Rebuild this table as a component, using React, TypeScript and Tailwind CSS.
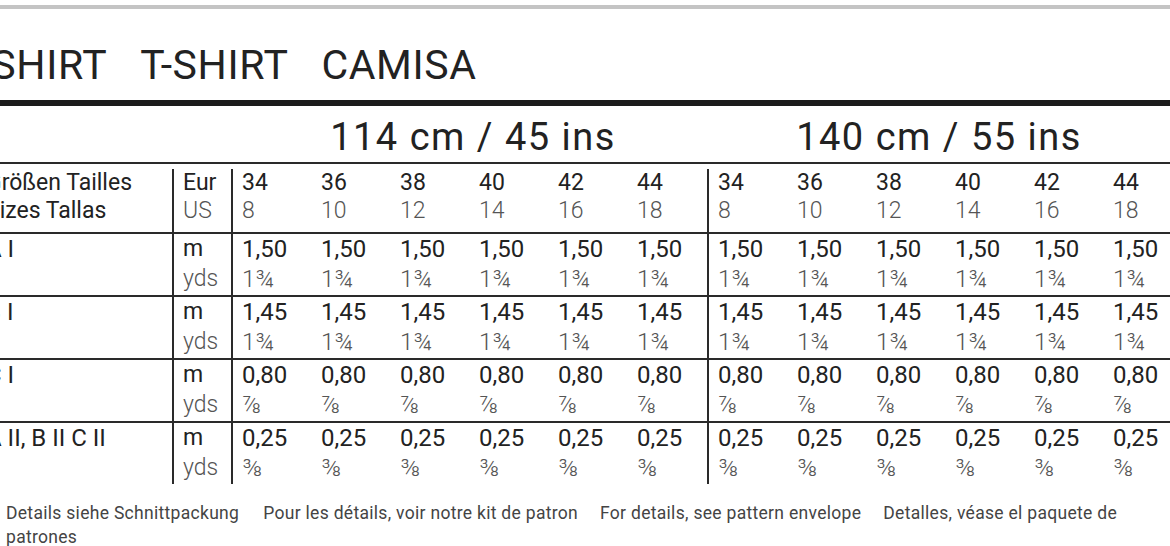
const sizes = [
  ["34", "8"],
  ["36", "10"],
  ["38", "12"],
  ["40", "14"],
  ["42", "16"],
  ["44", "18"],
]

const rows = [
  { label: "A I", m: "1,50", yds: "1¾" },
  { label: "B I", m: "1,45", yds: "1¾" },
  { label: "C I", m: "0,80", yds: "⅞" },
  { label: "A II, B II C II", m: "0,25", yds: "⅜" },
]

const font = { fontFamily: "Roboto, 'Liberation Sans', sans-serif" }

function SizeGroup({ last }: { last?: boolean }) {
  return (
    <div className={last ? "flex" : "flex border-r-2 border-[#2a2a2a]"}>
      {sizes.map(([eu, us]) => (
        <div key={eu} className="w-[79px] pl-[9px]">
          <div className="text-[#222]">{eu}</div>
          <div className="font-light text-[#555]">{us}</div>
        </div>
      ))}
    </div>
  )
}

function DataGroup({ m, yds, last }: { m: string; yds: string; last?: boolean }) {
  return (
    <div className={last ? "flex" : "flex border-r-2 border-[#2a2a2a]"}>
      {sizes.map(([eu]) => (
        <div key={eu} className="w-[79px] pl-[9px]">
          <div className="text-[#222]">{m}</div>
          <div className="font-light text-[#555]">{yds}</div>
        </div>
      ))}
    </div>
  )
}

export default function App() {
  return (
    <div className="w-[1170px] h-[546px] overflow-hidden bg-white" style={font}>
      {/* top rule */}
      <div className="pt-[5px]">
        <div className="h-[4px] bg-[#c4c4c4]" />
      </div>

      {/* Title */}
      <div className="ml-[-41px] mt-[36px] flex gap-[33px] whitespace-nowrap text-[41px] leading-[41px] tracking-[0.6px] text-[#222]">
        <span>T-SHIRT</span>
        <span>T-SHIRT</span>
        <span>CAMISA</span>
      </div>
      <div className="mt-[14px] h-[6px] bg-[#1c1c1c]" />

      {/* Table */}
      <div className="ml-[-24px] w-[1220px]">
        {/* width headers */}
        <div className="flex h-[56px] pt-[12px] text-[38px] leading-[38px] tracking-[1.5px] text-[#222] whitespace-nowrap">
          <div className="w-[257px]" />
          <div className="w-[480px] text-center">114 cm / 45 ins</div>
          <div className="w-[452px] text-center">140 cm / 55 ins</div>
        </div>

        {/* size row */}
        <div className="flex h-[70px] border-t-2 border-[#2a2a2a] pt-[5px] text-[23px] leading-[28px] whitespace-nowrap">
          <div className="w-[198px] border-r-2 border-[#2a2a2a] pl-[10px] text-[#222]">
            <div>Größen Tailles</div>
            <div>Sizes Tallas</div>
          </div>
          <div className="w-[59px] border-r-2 border-[#2a2a2a] pl-[9px]">
            <div className="text-[#222]">Eur</div>
            <div className="font-light text-[#555]">US</div>
          </div>
          <SizeGroup />
          <SizeGroup last />
        </div>

        {/* data rows */}
        {rows.map((row) => (
          <div
            key={row.label}
            className="flex h-[63px] border-t-2 border-[#2a2a2a] text-[24px] leading-[30px] whitespace-nowrap"
          >
            <div className="w-[198px] border-r-2 border-[#2a2a2a] pl-[10px] text-[#222]">
              {row.label}
            </div>
            <div className="w-[59px] border-r-2 border-[#2a2a2a] pl-[9px] text-[23px]">
              <div className="text-[#222]">m</div>
              <div className="font-light text-[#555]">yds</div>
            </div>
            <DataGroup m={row.m} yds={row.yds} />
            <DataGroup m={row.m} yds={row.yds} last />
          </div>
        ))}
      </div>

      {/* Footer */}
      <p className="mt-[17px] pl-[6px] text-[17.5px] leading-[24px] text-[#444] tracking-[0.3px]">
        <span className="mr-[24px]">Details siehe Schnittpackung</span>
        <span className="mr-[22px]">Pour les détails, voir notre kit de patron</span>
        <span className="mr-[22px]">For details, see pattern envelope</span>
        <span>Detalles, véase el paquete de patrones</span>
      </p>
    </div>
  )
}
